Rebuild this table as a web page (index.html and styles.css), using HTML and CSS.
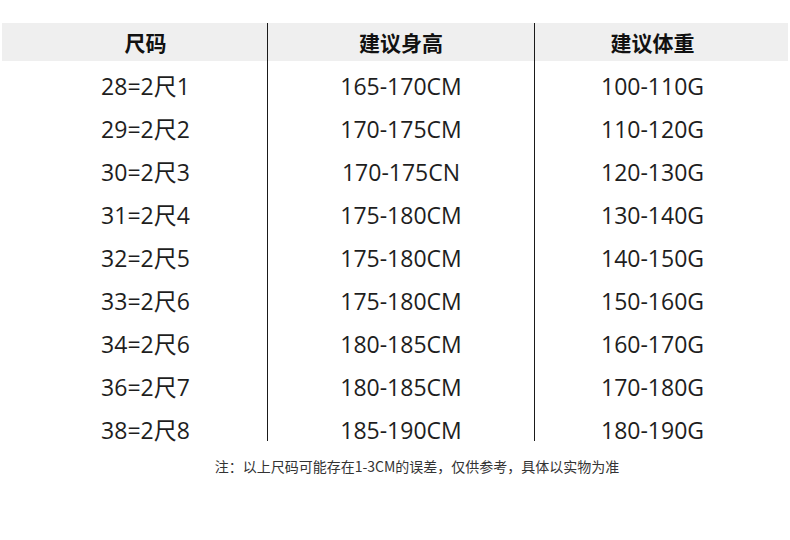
FILE: index.html
```html
<!DOCTYPE html>
<html lang="zh">
<head>
<meta charset="utf-8">
<link rel="stylesheet" href="styles.css">
</head>
<body>
<div class="page">
  <div class="table">
    <div class="row head">
      <div class="cell c1">尺码</div>
      <div class="cell c2">建议身高</div>
      <div class="cell c3">建议体重</div>
    </div>
    <div class="tbody">
      <div class="row"><div class="cell c1">28=2尺1</div><div class="cell c2">165-170CM</div><div class="cell c3">100-110G</div></div>
      <div class="row"><div class="cell c1">29=2尺2</div><div class="cell c2">170-175CM</div><div class="cell c3">110-120G</div></div>
      <div class="row"><div class="cell c1">30=2尺3</div><div class="cell c2">170-175CN</div><div class="cell c3">120-130G</div></div>
      <div class="row"><div class="cell c1">31=2尺4</div><div class="cell c2">175-180CM</div><div class="cell c3">130-140G</div></div>
      <div class="row"><div class="cell c1">32=2尺5</div><div class="cell c2">175-180CM</div><div class="cell c3">140-150G</div></div>
      <div class="row"><div class="cell c1">33=2尺6</div><div class="cell c2">175-180CM</div><div class="cell c3">150-160G</div></div>
      <div class="row"><div class="cell c1">34=2尺6</div><div class="cell c2">180-185CM</div><div class="cell c3">160-170G</div></div>
      <div class="row"><div class="cell c1">36=2尺7</div><div class="cell c2">180-185CM</div><div class="cell c3">170-180G</div></div>
      <div class="row last"><div class="cell c1">38=2尺8</div><div class="cell c2">185-190CM</div><div class="cell c3">180-190G</div></div>
    </div>
  </div>
  <p class="note">注：以上尺码可能存在1-3CM的误差，仅供参考，具体以实物为准</p>
</div>
</body>
</html>
```

FILE: styles.css
```css
html, body {
  margin: 0;
  padding: 0;
  background: #ffffff;
}
body {
  width: 790px;
  height: 540px;
  overflow: hidden;
  font-family: "Open Sans", "Noto Sans CJK SC", sans-serif;
  color: #1e1e1e;
}
.page {
  padding-top: 23px;
}
.table {
  margin-left: 2px;
  width: 786px;
}
.row {
  display: grid;
  grid-template-columns: 265px 267px 254px;
  height: 43px;
}
.cell {
  text-align: center;
  font-size: 23px;
  line-height: 43px;
  white-space: nowrap;
}
.c1 {
  padding-left: 22px;
}
.c2, .c3 {
  border-left: 1px solid #1a1a1a;
}
.c3 {
  padding-right: 18px;
}
.head {
  height: 38px;
  background: #efefef;
}
.head .cell {
  font-family: "Noto Sans CJK SC", sans-serif;
  font-weight: 700;
  font-size: 21px;
  line-height: 38px;
  color: #111111;
}
.tbody {
  padding-top: 4px;
}
.tbody .row:first-child .cell {
  margin-top: -4px;
  padding-top: 4px;
}
.row.last {
  height: 32px;
}
.row.last .cell {
  height: 32px;
  overflow: visible;
}
.note {
  margin: 15px 0 0;
  text-align: center;
  padding-left: 44px;
  font-family: "Noto Sans CJK SC", sans-serif;
  font-size: 14px;
  line-height: 20px;
  color: #333333;
}
```
